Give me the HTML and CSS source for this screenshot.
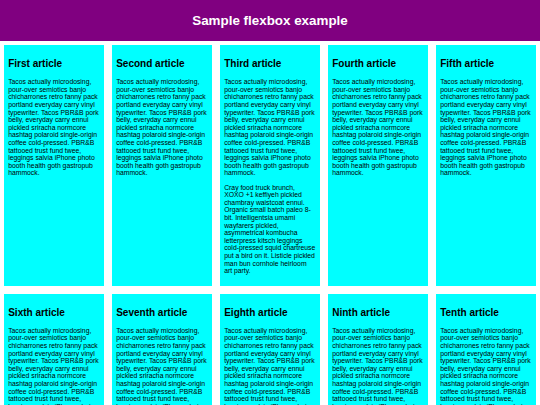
FILE: index.html
```html
<!DOCTYPE html>
<html lang="en">
<head>
    <meta charset="UTF-8">
    <meta name="viewport" content="width=device-width, initial-scale=1.0">
    <title>Flexbox wrap example</title>
    <link rel="stylesheet" href="styles.css">
</head>
<body>
    <header>
        <h1>Sample flexbox example</h1>
    </header>

    <section>
        <article>
            <h2>First article</h2>
            <p>Tacos actually microdosing, pour-over semiotics banjo chicharrones retro fanny pack portland everyday carry vinyl typewriter. Tacos PBR&amp;B pork belly, everyday carry ennui pickled sriracha normcore hashtag polaroid single-origin coffee cold-pressed. PBR&amp;B tattooed trust fund twee, leggings salvia iPhone photo booth health goth gastropub hammock.</p>
        </article>

        <article>
            <h2>Second article</h2>
            <p>Tacos actually microdosing, pour-over semiotics banjo chicharrones retro fanny pack portland everyday carry vinyl typewriter. Tacos PBR&amp;B pork belly, everyday carry ennui pickled sriracha normcore hashtag polaroid single-origin coffee cold-pressed. PBR&amp;B tattooed trust fund twee, leggings salvia iPhone photo booth health goth gastropub hammock.</p>
        </article>

        <article>
            <h2>Third article</h2>
            <p>Tacos actually microdosing, pour-over semiotics banjo chicharrones retro fanny pack portland everyday carry vinyl typewriter. Tacos PBR&amp;B pork belly, everyday carry ennui pickled sriracha normcore hashtag polaroid single-origin coffee cold-pressed. PBR&amp;B tattooed trust fund twee, leggings salvia iPhone photo booth health goth gastropub hammock.</p>
            <p>Cray food truck brunch, XOXO +1 keffiyeh pickled chambray waistcoat ennui. Organic small batch paleo 8-bit. Intelligentsia umami wayfarers pickled, asymmetrical kombucha letterpress kitsch leggings cold-pressed squid chartreuse put a bird on it. Listicle pickled man bun cornhole heirloom art party.</p>
        </article>

        <article>
            <h2>Fourth article</h2>
            <p>Tacos actually microdosing, pour-over semiotics banjo chicharrones retro fanny pack portland everyday carry vinyl typewriter. Tacos PBR&amp;B pork belly, everyday carry ennui pickled sriracha normcore hashtag polaroid single-origin coffee cold-pressed. PBR&amp;B tattooed trust fund twee, leggings salvia iPhone photo booth health goth gastropub hammock.</p>
        </article>

        <article>
            <h2>Fifth article</h2>
            <p>Tacos actually microdosing, pour-over semiotics banjo chicharrones retro fanny pack portland everyday carry vinyl typewriter. Tacos PBR&amp;B pork belly, everyday carry ennui pickled sriracha normcore hashtag polaroid single-origin coffee cold-pressed. PBR&amp;B tattooed trust fund twee, leggings salvia iPhone photo booth health goth gastropub hammock.</p>
        </article>

        <article>
            <h2>Sixth article</h2>
            <p>Tacos actually microdosing, pour-over semiotics banjo chicharrones retro fanny pack portland everyday carry vinyl typewriter. Tacos PBR&amp;B pork belly, everyday carry ennui pickled sriracha normcore hashtag polaroid single-origin coffee cold-pressed. PBR&amp;B tattooed trust fund twee, leggings salvia iPhone photo booth health goth gastropub hammock.</p>
        </article>

        <article>
            <h2>Seventh article</h2>
            <p>Tacos actually microdosing, pour-over semiotics banjo chicharrones retro fanny pack portland everyday carry vinyl typewriter. Tacos PBR&amp;B pork belly, everyday carry ennui pickled sriracha normcore hashtag polaroid single-origin coffee cold-pressed. PBR&amp;B tattooed trust fund twee, leggings salvia iPhone photo booth health goth gastropub hammock.</p>
        </article>

        <article>
            <h2>Eighth article</h2>
            <p>Tacos actually microdosing, pour-over semiotics banjo chicharrones retro fanny pack portland everyday carry vinyl typewriter. Tacos PBR&amp;B pork belly, everyday carry ennui pickled sriracha normcore hashtag polaroid single-origin coffee cold-pressed. PBR&amp;B tattooed trust fund twee, leggings salvia iPhone photo booth health goth gastropub hammock.</p>
        </article>

        <article>
            <h2>Ninth article</h2>
            <p>Tacos actually microdosing, pour-over semiotics banjo chicharrones retro fanny pack portland everyday carry vinyl typewriter. Tacos PBR&amp;B pork belly, everyday carry ennui pickled sriracha normcore hashtag polaroid single-origin coffee cold-pressed. PBR&amp;B tattooed trust fund twee, leggings salvia iPhone photo booth health goth gastropub hammock.</p>
        </article>

        <article>
            <h2>Tenth article</h2>
            <p>Tacos actually microdosing, pour-over semiotics banjo chicharrones retro fanny pack portland everyday carry vinyl typewriter. Tacos PBR&amp;B pork belly, everyday carry ennui pickled sriracha normcore hashtag polaroid single-origin coffee cold-pressed. PBR&amp;B tattooed trust fund twee, leggings salvia iPhone photo booth health goth gastropub hammock.</p>
        </article>
    </section>
</body>
</html>
```

FILE: styles.css
```css
html {
    font-family: "Liberation Sans", Arial, sans-serif;
    font-size: 6.8px;
}

body {
    margin: 0;
}

header {
    background: purple;
    height: 41px;
}

h1 {
    text-align: center;
    color: white;
    line-height: 41px;
    font-size: 13.4px;
    margin: 0;
}

section {
    display: flex;
    flex-wrap: wrap;
}

article {
    flex: 82px;
    padding: 4.1px;
    margin: 4.1px;
    background: aqua;
}

article h2 {
    font-size: 10px;
    margin: 9px 0;
}

article p {
    margin: 6.7px 0;
    line-height: 7.6px;
}
```
